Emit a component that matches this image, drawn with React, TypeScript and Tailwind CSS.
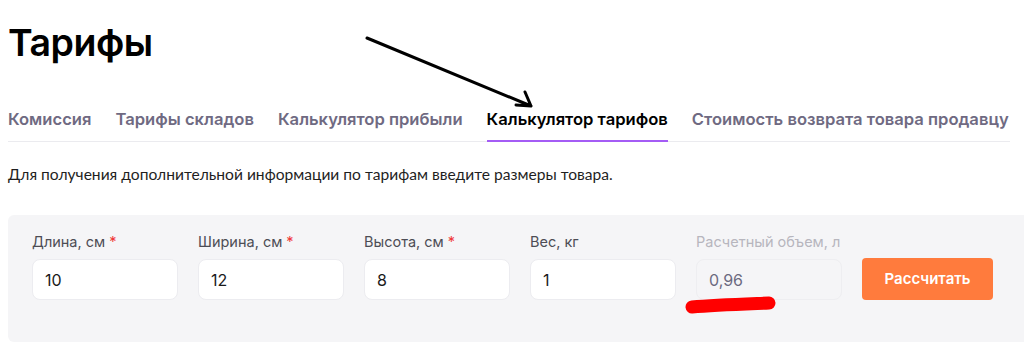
const tabs = [
  "Комиссия",
  "Тарифы складов",
  "Калькулятор прибыли",
  "Калькулятор тарифов",
  "Стоимость возврата товара продавцу",
];

const fields = [
  { label: "Длина, см", value: "10", required: true },
  { label: "Ширина, см", value: "12", required: true },
  { label: "Высота, см", value: "8", required: true },
  { label: "Вес, кг", value: "1", required: false },
];

export default function App() {
  const active = 3;

  return (
    <div className="relative h-[355px] w-[1024px] overflow-hidden bg-white font-['Inter',sans-serif]">
      <div className="pl-2">
        <h1 className="pt-[21px] text-[37.5px] font-semibold leading-[44px] tracking-[-0.5px] text-black">
          Тарифы
        </h1>

        <div className="mt-[42px] mr-[14px] flex gap-6 border-b border-[#ebebef]">
          {tabs.map((t, i) => (
            <div
              key={t}
              className={`-mb-px shrink-0 whitespace-nowrap border-b-2 pb-[9px] text-[16.6px] font-semibold leading-6 ${
                i === active
                  ? "border-[#a45cf5] text-black"
                  : "border-transparent text-[#6f6a82]"
              }`}
            >
              {t}
            </div>
          ))}
        </div>

        <p className="mt-[22px] whitespace-nowrap font-['Lato',sans-serif] text-[15.6px] leading-5 text-[#1f1f1f]">
          Для получения дополнительной информации по тарифам введите размеры товара.
        </p>

        <div className="mt-[31px] flex h-[127px] items-start gap-5 rounded-l-md bg-[#f5f5f7] pt-[17px] pl-6">
          {fields.map((f) => (
            <div key={f.label} className="flex w-[146px] shrink-0 flex-col">
              <div className="whitespace-nowrap text-[14.5px] leading-5 text-[#4d4d55]">
                {f.label}
                {f.required && <span className="ml-1 text-[#f0393a]">*</span>}
              </div>
              <div className="mt-[7px] flex h-[41px] items-center rounded-lg border border-[#ececf0] bg-white px-3 text-[16px] text-[#1a1a1a]">
                {f.value}
              </div>
            </div>
          ))}
          <div className="flex w-[146px] shrink-0 flex-col">
            <div className="whitespace-nowrap text-[14.5px] leading-5 text-[#b7b6be]">
              Расчетный объем, л
            </div>
            <div className="mt-[7px] flex h-[41px] items-center rounded-lg border border-[#eeeef1] bg-[#f5f5f7] px-3 text-[16px] text-[#6c6a80]">
              0,96
            </div>
          </div>
          <button className="mt-[26px] h-[42px] w-[131px] shrink-0 rounded bg-[#ff7b3d] text-[15px] font-semibold text-white">
            Рассчитать
          </button>
        </div>
      </div>

      <svg
        className="pointer-events-none absolute inset-0"
        width="1024"
        height="355"
        viewBox="0 0 1024 355"
      >
        <path
          d="M367 38 L531 106 M525 92 L531 106 L516 105"
          fill="none"
          stroke="#000"
          strokeWidth="3"
          strokeLinecap="round"
          strokeLinejoin="round"
        />
        <path
          d="M692 307 C715 305 745 304 769 303"
          fill="none"
          stroke="#ff0000"
          strokeWidth="13"
          strokeLinecap="round"
        />
      </svg>
    </div>
  );
}
